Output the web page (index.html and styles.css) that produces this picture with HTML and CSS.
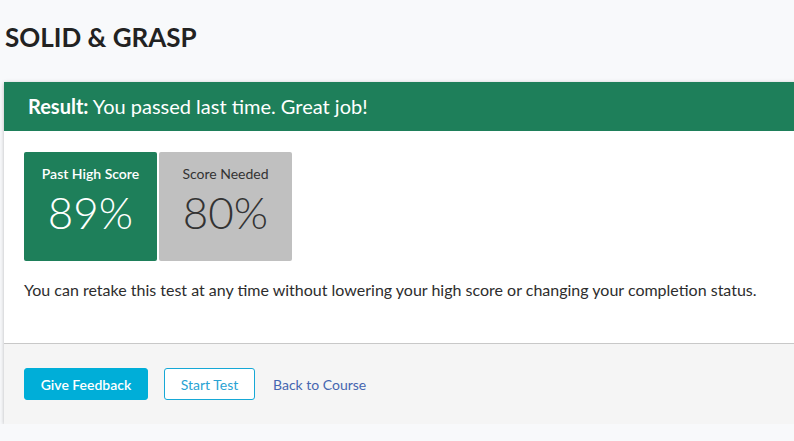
FILE: index.html
```html
<!DOCTYPE html>
<html>
<head>
<meta charset="utf-8">
<link rel="stylesheet" href="styles.css">
</head>
<body>
<div class="page">
  <h1 class="title">SOLID &amp; GRASP</h1>
  <div class="card">
    <div class="result-bar"><strong>Result:</strong> You passed last time. Great job!</div>
    <div class="card-body">
      <div class="scores">
        <div class="score score-high">
          <div class="score-label">Past High Score</div>
          <div class="score-value">89%</div>
        </div>
        <div class="score score-needed">
          <div class="score-label">Score Needed</div>
          <div class="score-value">80%</div>
        </div>
      </div>
      <p class="note">You can retake this test at any time without lowering your high score or changing your completion status.</p>
    </div>
    <div class="card-footer">
      <button class="btn btn-primary">Give Feedback</button>
      <button class="btn btn-outline">Start Test</button>
      <a class="link" href="#">Back to Course</a>
    </div>
  </div>
</div>
</body>
</html>
```
FILE: styles.css
```css
html, body {
  margin: 0;
  padding: 0;
  background: #f8f9fb;
  overflow: hidden;
}
body {
  font-family: "Lato", "Liberation Sans", sans-serif;
  color: #2d2d2d;
}
.page {
  padding: 0 0 0 4px;
}
.title {
  margin: 0;
  padding: 22px 0 0 1px;
  height: 82px;
  box-sizing: border-box;
  font-size: 26px;
  font-weight: 700;
  line-height: 30px;
  color: #222;
}
.card {
  margin-right: -20px;
  background: #fff;
  box-shadow: 0 1px 4px rgba(0,0,0,0.25);
}
.result-bar {
  background: #1e7f5a;
  color: #fff;
  height: 49px;
  line-height: 49px;
  padding-left: 24px;
  font-size: 20px;
}
.result-bar strong {
  font-weight: 700;
}
.card-body {
  padding: 21px 20px 0 20px;
  height: 213px;
  box-sizing: border-box;
  border-bottom: 1px solid #c8c8c8;
}
.scores {
  display: flex;
  gap: 2px;
}
.score {
  width: 133px;
  height: 109px;
  border-radius: 2px;
  text-align: center;
  box-sizing: border-box;
  padding-top: 13px;
}
.score-high {
  background: #1e7f5a;
  color: #fff;
}
.score-needed {
  background: #c0c0c0;
  color: #333;
}
.score-label {
  font-size: 14px;
  line-height: 17px;
}
.score-high .score-label {
  font-weight: 600;
}
.score-value {
  font-size: 44px;
  font-weight: 300;
  line-height: 52px;
  margin-top: 4px;
}
.note {
  margin: 19px 0 0 0;
  font-size: 16px;
  line-height: 20px;
  color: #2d2d2d;
}
.card-footer {
  background: #f5f5f5;
  height: 80px;
  padding: 0 20px;
  display: flex;
  align-items: center;
  gap: 16px;
}
.btn {
  font-family: "Lato", "Liberation Sans", sans-serif;
  font-size: 14px;
  height: 32px;
  border-radius: 3px;
  padding: 0;
  white-space: nowrap;
  cursor: pointer;
}
.btn-primary {
  background: #00aed8;
  color: #fff;
  border: 1px solid #00aed8;
  width: 124px;
  font-weight: 600;
}
.btn-outline {
  background: #fff;
  color: #2aa3d3;
  border: 1px solid #16a8d6;
  width: 91px;
}
.link {
  margin-left: 2px;
  color: #4566b0;
  font-size: 14px;
  text-decoration: none;
}
```
